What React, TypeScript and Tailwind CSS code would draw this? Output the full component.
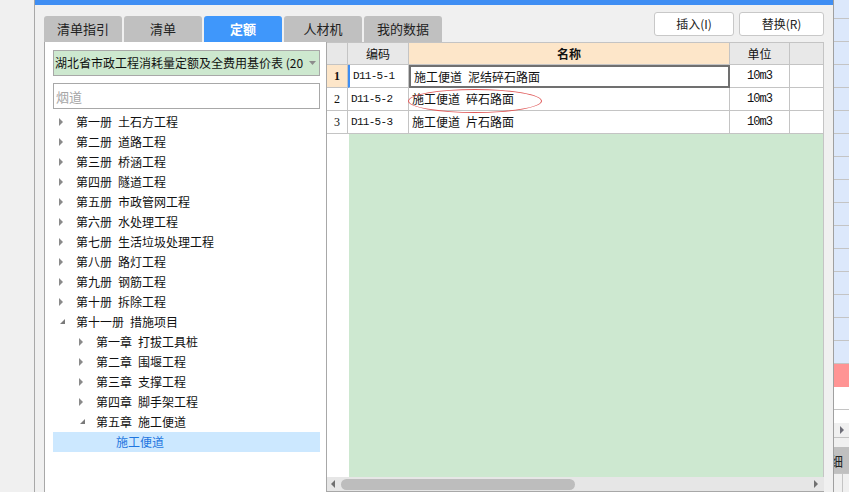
import React from 'react';

type Node = { label: string; level: number; state: 'closed' | 'open' | 'leaf'; selected?: boolean };

const tree: Node[] = [
  { label: '第一册\u2002土石方工程', level: 0, state: 'closed' },
  { label: '第二册\u2002道路工程', level: 0, state: 'closed' },
  { label: '第三册\u2002桥涵工程', level: 0, state: 'closed' },
  { label: '第四册\u2002隧道工程', level: 0, state: 'closed' },
  { label: '第五册\u2002市政管网工程', level: 0, state: 'closed' },
  { label: '第六册\u2002水处理工程', level: 0, state: 'closed' },
  { label: '第七册\u2002生活垃圾处理工程', level: 0, state: 'closed' },
  { label: '第八册\u2002路灯工程', level: 0, state: 'closed' },
  { label: '第九册\u2002钢筋工程', level: 0, state: 'closed' },
  { label: '第十册\u2002拆除工程', level: 0, state: 'closed' },
  { label: '第十一册\u2002措施项目', level: 0, state: 'open' },
  { label: '第一章\u2002打拔工具桩', level: 1, state: 'closed' },
  { label: '第二章\u2002围堰工程', level: 1, state: 'closed' },
  { label: '第三章\u2002支撑工程', level: 1, state: 'closed' },
  { label: '第四章\u2002脚手架工程', level: 1, state: 'closed' },
  { label: '第五章\u2002施工便道', level: 1, state: 'open' },
  { label: '施工便道', level: 2, state: 'leaf', selected: true },
];

const rows = [
  { no: '1', code: 'D11-5-1', name: '施工便道\u2002泥结碎石路面', unit: '10m3' },
  { no: '2', code: 'D11-5-2', name: '施工便道\u2002碎石路面', unit: '10m3' },
  { no: '3', code: 'D11-5-3', name: '施工便道\u2002片石路面', unit: '10m3' },
];

const tabs = ['清单指引', '清单', '定额', '人材机', '我的数据'];

function Arrow({ state }: { state: Node['state'] }) {
  if (state === 'closed')
    return (
      <svg width="5" height="8" viewBox="0 0 5 8" className="ml-[6px]">
        <polygon points="0,0 4,4 0,8" fill="#8a8a8a" />
      </svg>
    );
  if (state === 'open')
    return (
      <svg width="6" height="6" viewBox="0 0 6 6" className="ml-[7px]">
        <polygon points="5,0 5,5 0,5" fill="#7a7a7a" />
      </svg>
    );
  return null;
}

function TreeRow({ node }: { node: Node }) {
  const indent = ['pl-0', 'pl-[20px]', 'pl-[40px]'][node.level];
  return (
    <div className={`h-[20px] flex items-center ${node.selected ? 'bg-[#cce8ff] text-[#1f76e0]' : 'text-[#111]'}`}>
      <div className={`${indent} flex items-center`}>
        <div className="w-[23px] flex items-center">
          <Arrow state={node.state} />
        </div>
        <span className="whitespace-pre leading-none">{node.label}</span>
      </div>
    </div>
  );
}

function RightStrip() {
  return (
    <div className="w-[16px] shrink-0 border-l border-[#a0a0a0] flex flex-col bg-[#f0f0f0]">
      <div className="h-[19px] bg-[#dce8fb] border-b border-[#c4c4c4]" />
      {Array.from({ length: 15 }).map((_, i) => (
        <div key={i} className="h-[23px] bg-[#dce8fb] border-b border-[#c4c4c4]" />
      ))}
      <div className="h-[23px] bg-[#ff9494]" />
      <div className="h-[23px] bg-white border-b border-[#c4c4c4]" />
      <div className="h-[13px] bg-white" />
      <div className="h-[15px] bg-[#f0f0f0] border-b border-[#c4c4c4] flex items-center pl-[6px]">
        <svg width="5" height="8" viewBox="0 0 5 8">
          <polygon points="0,0 4,4 0,8" fill="#6e6e78" />
        </svg>
      </div>
      <div className="h-[9px]" />
      <div className="h-[26px] bg-[#c0c0c0] overflow-hidden flex items-center">
        <span className="text-[13px] -ml-[4px] leading-none text-[#222]">细</span>
      </div>
      <div className="flex-1 border-t border-[#c4c4c4] flex">
        <div className="w-[9px] border-r border-[#c4c4c4]" />
      </div>
    </div>
  );
}

export default function App() {
  return (
    <div className="w-[849px] h-[492px] overflow-hidden flex bg-[#f0f0f0] font-['Noto_Sans_CJK_SC',sans-serif] text-[12px] text-[#111]">
      {/* left edge */}
      <div className="w-[35px] shrink-0 bg-[#f0f0f0] border-r border-[#a8a8a8]" />

      {/* main */}
      <div className="w-[798px] shrink-0 flex flex-col">
        <div className="h-[5px] bg-[#3f8ef3]" />

        {/* tabs + buttons */}
        <div className="h-[37px] flex items-start pl-[9px] pr-[9px]">
          <div className="flex gap-[2px] mt-[11px]">
            {tabs.map((t) => (
              <div
                key={t}
                className={`w-[78px] h-[26px] rounded-t-[3px] flex items-center justify-center text-[13px] ${
                  t === '定额' ? 'bg-[#3f97fb] text-white font-bold' : 'bg-[#c0c0c0] text-[#222]'
                }`}
              >
                {t}
              </div>
            ))}
          </div>
          <div className="ml-auto mt-[7px] flex gap-[5px]">
            <button className="w-[80px] h-[24px] bg-white border border-[#c8c8c8] rounded-[3px] text-[12px] text-[#222] font-['Noto_Sans_CJK_SC',sans-serif]">
              插入(I)
            </button>
            <button className="w-[85px] h-[24px] bg-white border border-[#c8c8c8] rounded-[3px] text-[12px] text-[#222] font-['Noto_Sans_CJK_SC',sans-serif]">
              替换(R)
            </button>
          </div>
        </div>

        {/* body */}
        <div className="flex-1 min-h-0 flex pl-[9px]">
          {/* left panel */}
          <div className="w-[283px] shrink-0 bg-white border-l border-r border-[#a8a8a8] pl-[8px] pr-[6px] flex flex-col">
            <div className="mt-[8px] h-[26px] bg-[#cde8cf] border border-[#a8a8a8] flex items-center pl-[1px] pr-[3px]">
              <span className="text-[12px] whitespace-nowrap leading-none">湖北省市政工程消耗量定额及全费用基价表 (20</span>
              <svg width="7" height="4" viewBox="0 0 7 4" className="ml-auto shrink-0">
                <polygon points="0,0 7,0 3.5,4" fill="#8c8c8c" />
              </svg>
            </div>
            <div className="mt-[7px] h-[26px] bg-white border border-[#a8a8a8] flex items-center pl-[2px]">
              <span className="text-[13px] text-[#a6a6a6] leading-none">烟道</span>
            </div>
            <div className="mt-[3px] flex flex-col">
              {tree.map((n, i) => (
                <TreeRow key={i} node={n} />
              ))}
            </div>
          </div>

          {/* grid */}
          <div className="w-[497px] shrink-0 relative flex flex-col bg-white border-b border-[#a8a8a8]">
            <div className="h-[23px] flex border-t border-[#c4c4c4] bg-[#e8e8e8] shrink-0">
              <div className="w-[21px] border-r border-b border-[#c4c4c4]" />
              <div className="w-[61px] border-r border-b border-[#c4c4c4] flex items-center justify-center">编码</div>
              <div className="w-[321px] border-r border-b border-[#c4c4c4] bg-[#fde6c9] flex items-center justify-center font-bold">名称</div>
              <div className="w-[60px] border-r border-b border-[#c4c4c4] flex items-center justify-center">单位</div>
              <div className="w-[34px] border-r border-b border-[#c4c4c4]" />
            </div>
            {rows.map((r, i) => (
              <div key={r.no} className="h-[23px] flex shrink-0">
                <div
                  className={`w-[21px] border-r border-b border-[#c4c4c4] flex items-center justify-center font-['Liberation_Serif',serif] text-[12px] ${
                    i === 0 ? 'bg-[#fde6c9] font-bold' : 'bg-white'
                  }`}
                >
                  {r.no}
                </div>
                <div
                  className={`w-[61px] border-r border-b border-[#c4c4c4] flex items-center pl-[3px] font-['Liberation_Mono',monospace] text-[11px] tracking-[-0.7px] ${
                    i === 0 ? 'border-l-2 border-l-[#3f8ef3] pl-[1px]' : ''
                  }`}
                >
                  {r.code}
                </div>
                <div
                  className={`w-[321px] flex items-center pl-[3px] whitespace-pre ${
                    i === 0 ? 'border-2 border-[#707070] pl-[2px]' : 'border-r border-b border-[#c4c4c4]'
                  }`}
                >
                  {r.name}
                </div>
                <div className="w-[60px] border-r border-b border-[#c4c4c4] flex items-center justify-center font-['Liberation_Mono',monospace] text-[12px] tracking-[-1px]">
                  {r.unit}
                </div>
                <div className="w-[34px] border-r border-b border-[#c4c4c4]" />
              </div>
            ))}
            <div className="flex-1 min-h-0 flex">
              <div className="w-[22px] bg-white" />
              <div className="flex-1 bg-[#cde8d0] border-r border-[#c4c4c4]" />
            </div>
            <div className="h-[14px] shrink-0 bg-[#e6e6e6] flex items-center pl-[4px] pr-[5px]">
              <svg width="5" height="8" viewBox="0 0 5 8">
                <polygon points="4,0 0,4 4,8" fill="#707070" />
              </svg>
              <div className="ml-[5px] w-[234px] h-[11px] rounded-full bg-[#bdbdbd]" />
              <svg width="5" height="8" viewBox="0 0 5 8" className="ml-auto">
                <polygon points="0,0 4,4 0,8" fill="#707070" />
              </svg>
            </div>

            {/* hand-drawn annotation */}
            <div className="absolute left-[81px] top-[47px] w-[134px] h-[24px] rounded-[50%] border border-[#e05a5a]" />
          </div>
        </div>
      </div>

      <RightStrip />
    </div>
  );
}
